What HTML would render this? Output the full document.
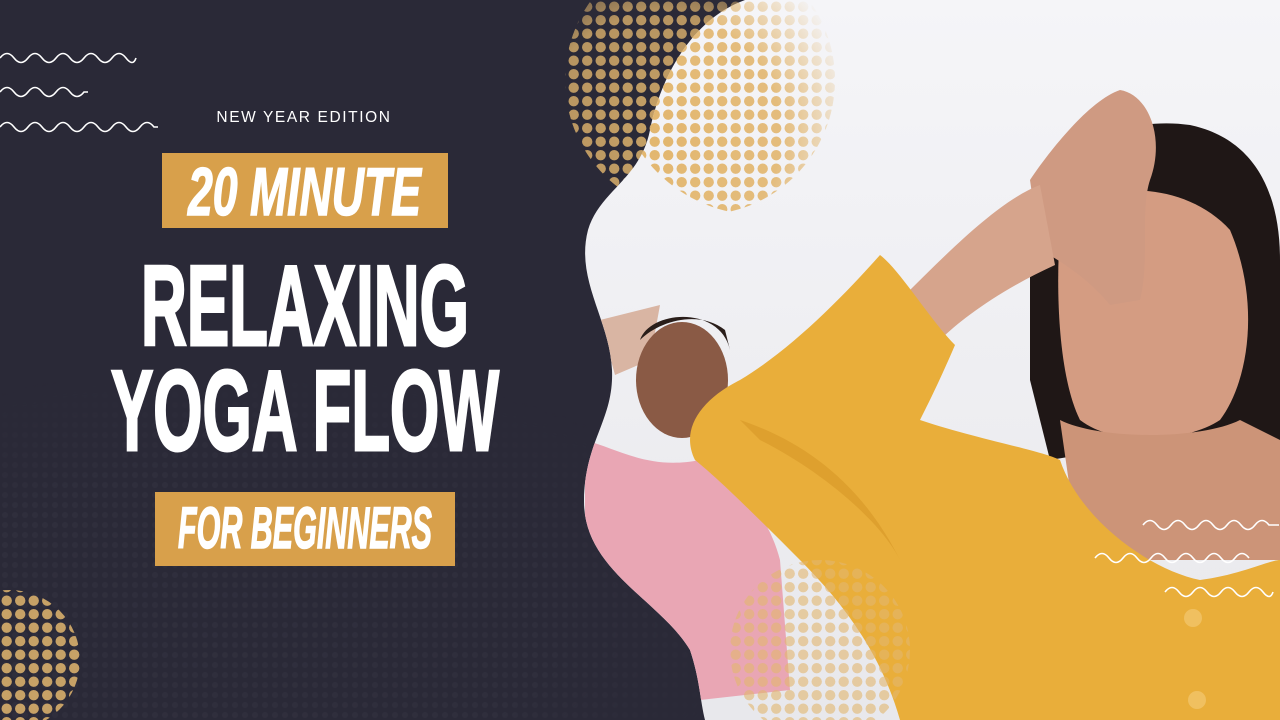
<!DOCTYPE html>
<html><head><meta charset="utf-8"><style>
html,body{margin:0;padding:0;width:1280px;height:720px;overflow:hidden;background:#2a2937}
svg{display:block}
</style></head><body>
<svg width="1280" height="720" viewBox="0 0 1280 720" xmlns="http://www.w3.org/2000/svg">
<defs>
<pattern id="dots" width="13.5" height="13.5" patternUnits="userSpaceOnUse"><circle cx="6.7" cy="6.7" r="5.2" fill="#e2b66e"/></pattern>
<pattern id="dots2" width="10" height="10" patternUnits="userSpaceOnUse"><circle cx="5" cy="5" r="3" fill="#343341"/></pattern>
<radialGradient id="fade" cx="0.35" cy="0.7" r="0.75"><stop offset="0" stop-color="#fff"/><stop offset="0.6" stop-color="#fff" stop-opacity="0.9"/><stop offset="1" stop-color="#fff" stop-opacity="0"/></radialGradient>
<mask id="m1"><circle cx="700" cy="80" r="135" fill="url(#fade)"/></mask>
<mask id="m3"><rect x="0" y="380" width="700" height="340" fill="url(#fade)"/></mask>
<clipPath id="blob"><path d="M745 0 C690 20 660 80 650 130 C640 180 600 190 588 230 C575 280 610 320 612 370 C614 420 585 440 584 500 C583 570 660 600 690 650 C700 680 700 700 705 720 L1280 720 L1280 0 Z"/></clipPath>
<linearGradient id="sky" x1="0" y1="0" x2="0" y2="1"><stop offset="0" stop-color="#f5f5f8"/><stop offset="1" stop-color="#e8e8ec"/></linearGradient>
</defs>
<rect x="0" y="380" width="700" height="340" fill="url(#dots2)" mask="url(#m3)" opacity="0.6"/>
<circle cx="700" cy="80" r="135" fill="url(#dots)" mask="url(#m1)" opacity="0.85"/>
<circle cx="10" cy="660" r="70" fill="url(#dots)" opacity="0.85"/>
<g clip-path="url(#blob)">
<rect width="1280" height="720" fill="url(#sky)"/>
<circle cx="760" cy="70" r="145" fill="url(#dots)" mask="url(#m1)"/>
<path d="M600 320 L660 305 L650 360 L615 375 Z" fill="#d9b5a3"/>
<ellipse cx="682" cy="380" rx="46" ry="58" fill="#8a5a45"/>
<path d="M640 340 C650 310 720 305 730 350 L725 330 C700 310 660 320 640 340Z" fill="#2a1e1a"/>
<path d="M585 440 C620 450 650 470 700 460 C740 480 770 520 780 560 L790 690 L700 700 L640 620 L585 560 Z" fill="#e9a6b4"/>
<path d="M1030 230 C1040 150 1120 115 1190 125 C1260 140 1280 200 1280 260 L1280 460 L1230 430 L1050 460 L1030 380 Z" fill="#1f1716"/>
<path d="M1060 230 C1080 180 1180 175 1230 230 C1260 300 1250 380 1220 420 C1190 440 1120 450 1080 420 C1060 380 1055 300 1060 230Z" fill="#d49c82"/>
<path d="M1060 420 C1100 440 1200 440 1240 420 L1280 440 L1280 560 L1080 560 Z" fill="#cc9478"/>
<path d="M1030 180 C1050 150 1090 100 1120 90 C1150 95 1165 140 1150 180 C1140 210 1150 260 1140 300 L1110 305 C1090 280 1060 260 1040 250Z" fill="#cf9a82"/>
<path d="M900 300 C950 250 1000 200 1040 185 L1055 265 C1000 290 960 320 940 340Z" fill="#d6a48c"/>
<path d="M880 255 C900 270 930 320 955 345 C940 380 930 400 920 420 C980 440 1040 450 1060 460 C1080 520 1150 570 1200 580 C1240 575 1270 560 1280 560 L1280 720 L900 720 C880 650 840 600 800 560 C760 520 720 480 695 460 C680 430 700 400 740 380 C790 350 840 300 880 255Z" fill="#e9ae3a"/>
<path d="M740 420 C800 440 860 480 900 560 C880 520 820 470 760 440Z" fill="#d99a2a" opacity="0.7"/>
<circle cx="1193" cy="618" r="9" fill="#f0c060"/><circle cx="1197" cy="700" r="9" fill="#f0c060"/>
<circle cx="820" cy="650" r="90" fill="url(#dots)" opacity="0.6"/>
</g>
<g fill="none" stroke="#fff" stroke-width="1.6">
<path d="M0 58 q7 -9 14 0 t14 0 t14 0 t14 0 t14 0 t14 0 t14 0 t14 0 t14 0 t10 0"/>
<path d="M0 92 q7 -9 14 0 t14 0 t14 0 t14 0 t14 0 t14 0 l4 0"/>
<path d="M0 127 q7 -9 14 0 t14 0 t14 0 t14 0 t14 0 t14 0 t14 0 t14 0 t14 0 t14 0 t14 0 l4 0"/>
<path d="M1143 525 q7 -9 14 0 t14 0 t14 0 t14 0 t14 0 t14 0 t14 0 t14 0 t14 0 l10 0"/>
<path d="M1095 558 q7 -9 14 0 t14 0 t14 0 t14 0 t14 0 t14 0 t14 0 t14 0 t14 0 t14 0 t14 0"/>
<path d="M1165 592 q7 -9 14 0 t14 0 t14 0 t14 0 t14 0 t14 0 t14 0 t10 0"/>
</g>
<text x="304" y="122" text-anchor="middle" fill="#fff" font-family="Liberation Sans, sans-serif" font-size="15.5" letter-spacing="1.6">NEW YEAR EDITION</text>
<rect x="162" y="153" width="286" height="75" fill="#d8a04b"/>
<text x="188" y="215" textLength="233" lengthAdjust="spacingAndGlyphs" fill="#fff" stroke="#fff" stroke-width="1.5" font-family="Liberation Sans Narrow, Liberation Sans, sans-serif" font-weight="bold" font-style="italic" font-size="68">20 MINUTE</text>
<text x="141" y="345" textLength="328" lengthAdjust="spacingAndGlyphs" fill="#fff" stroke="#fff" stroke-width="3" font-family="Liberation Sans Narrow, Liberation Sans, sans-serif" font-weight="bold" font-size="114">RELAXING</text>
<text x="111" y="450" textLength="388" lengthAdjust="spacingAndGlyphs" fill="#fff" stroke="#fff" stroke-width="3" font-family="Liberation Sans Narrow, Liberation Sans, sans-serif" font-weight="bold" font-size="114">YOGA FLOW</text>
<rect x="155" y="492" width="300" height="74" fill="#d8a04b"/>
<text x="178" y="548" textLength="254" lengthAdjust="spacingAndGlyphs" fill="#fff" stroke="#fff" stroke-width="1.5" font-family="Liberation Sans Narrow, Liberation Sans, sans-serif" font-weight="bold" font-style="italic" font-size="58">FOR BEGINNERS</text>
</svg>
</body></html>
